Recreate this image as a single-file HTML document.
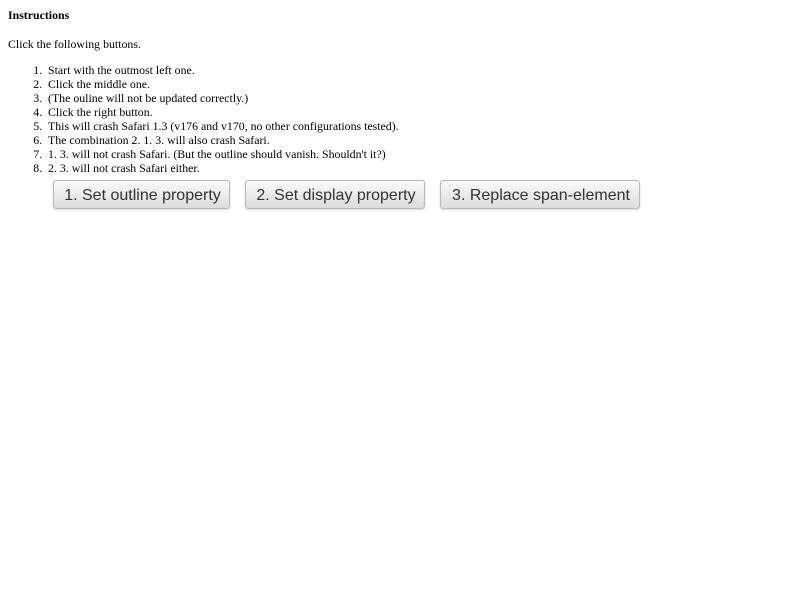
<!DOCTYPE html>
<html><head><style>
body{margin:0;font-family:"Liberation Serif",serif;font-size:11.85px;color:#000;background:#fff}
h1{position:absolute;left:8px;top:8px;margin:0;font-size:11.85px;font-weight:bold;line-height:14px}
p{position:absolute;left:8px;top:37px;margin:0;line-height:14px}
ol{position:absolute;left:0;top:63px;margin:0;padding-left:48px;line-height:14px}
li::marker{content:counter(list-item) ".  ";}
.b{position:absolute;top:180px;height:29px;box-sizing:border-box;border:1px solid #b8b8b8;border-radius:3px;
background:linear-gradient(#fbfbfb,#dcdcdc);box-shadow:0 1px 2px rgba(0,0,0,.15);
font-family:"Liberation Sans",sans-serif;font-size:16px;color:#333;text-align:center;line-height:28px;padding-top:1px;padding-left:2px}
</style></head><body>
<h1>Instructions</h1>
<p>Click the following buttons.</p>
<ol>
<li>Start with the outmost left one.</li>
<li>Click the middle one.</li>
<li>(The ouline will not be updated correctly.)</li>
<li>Click the right button.</li>
<li>This will crash Safari 1.3 (v176 and v170, no other configurations tested).</li>
<li>The combination 2. 1. 3. will also crash Safari.</li>
<li>1. 3. will not crash Safari. (But the outline should vanish. Shouldn't it?)</li>
<li>2. 3. will not crash Safari either.</li>
</ol>
<div class="b" style="left:53px;width:177px">1. Set outline property</div>
<div class="b" style="left:245px;width:180px">2. Set display property</div>
<div class="b" style="left:440px;width:200px">3. Replace span-element</div>
</body></html>
